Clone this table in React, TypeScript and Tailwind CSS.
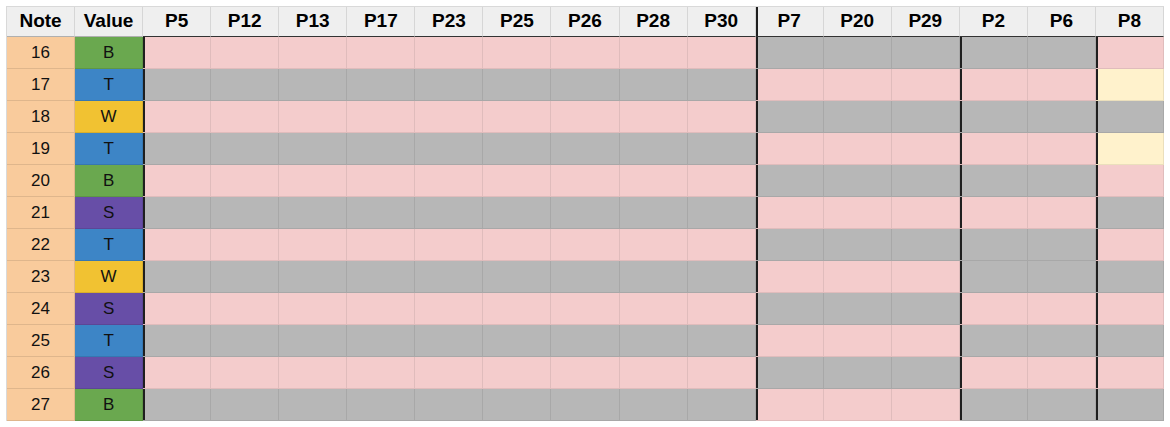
import React from "react";

const notes = [16, 17, 18, 19, 20, 21, 22, 23, 24, 25, 26, 27];
const values = "BTWTBSTWSTSB".split("");

const valueBg: Record<string, string> = {
  B: "bg-[#6aa84f]",
  T: "bg-[#3d85c6]",
  W: "bg-[#f1c232]",
  S: "bg-[#674ea7]",
};

const cellBg: Record<string, string> = {
  P: "bg-[#f4cccc]",
  G: "bg-[#b7b7b7]",
  Y: "bg-[#fff2cc]",
};

const A = "PGPGPGPGPGPG";
const B = "GPGPGPGPGPGP";
const C = "GPGPGPGGPGPG";
const D = "PYGYPGPGPGPG";

type Col = { name: string; pat: string; thick?: boolean; thickHead?: boolean };

const cols: Col[] = [
  { name: "P5", pat: A, thick: true },
  { name: "P12", pat: A },
  { name: "P13", pat: A },
  { name: "P17", pat: A },
  { name: "P23", pat: A },
  { name: "P25", pat: A },
  { name: "P26", pat: A },
  { name: "P28", pat: A },
  { name: "P30", pat: A },
  { name: "P7", pat: B, thick: true, thickHead: true },
  { name: "P20", pat: B },
  { name: "P29", pat: B },
  { name: "P2", pat: C, thick: true },
  { name: "P6", pat: C },
  { name: "P8", pat: D, thick: true },
];

const font = { fontFamily: '"Liberation Sans", Arial, sans-serif' };

export default function App() {
  return (
    <div className="w-[1170px] h-[427px] bg-white pl-[6px] pt-[6px]" style={font}>
      <div className="w-[1158px] border-l border-t border-[#d9d9d9] grid grid-cols-[repeat(17,minmax(0,1fr))] text-black">
        {/* header */}
        <div className="h-[30px] bg-[#efefef] border-r border-b border-r-[#d6d6d6] border-b-[#b0b0b0] flex items-center justify-center text-[19px] font-bold">
          Note
        </div>
        <div className="h-[30px] bg-[#efefef] border-r border-b border-r-[#d6d6d6] border-b-[#b0b0b0] flex items-center justify-center text-[19px] font-bold">
          Value
        </div>
        {cols.map((c) => (
          <div
            key={c.name}
            className={
              "h-[30px] bg-[#efefef] border-r border-b border-r-[#d6d6d6] border-b-[#333333] flex items-center justify-center text-[19px] font-bold " +
              (c.thickHead ? "shadow-[inset_2px_0_0_#1f1f1f]" : "")
            }
          >
            {c.name}
          </div>
        ))}
        {/* rows */}
        {notes.map((n, i) => (
          <React.Fragment key={n}>
            <div className="h-[32px] bg-[#f9cb9c] border-r border-b border-black/10 flex items-center justify-center text-[17px] text-[#111]">
              {n}
            </div>
            <div
              className={
                "h-[32px] border-r border-b border-black/10 flex items-center justify-center text-[17px] text-[#111] " +
                valueBg[values[i]]
              }
            >
              {values[i]}
            </div>
            {cols.map((c) => (
              <div
                key={c.name}
                className={
                  "h-[32px] border-r border-b border-black/[0.08] " +
                  cellBg[c.pat[i]] +
                  (c.thick ? " shadow-[inset_2px_0_0_#1f1f1f]" : "")
                }
              />
            ))}
          </React.Fragment>
        ))}
      </div>
    </div>
  );
}
